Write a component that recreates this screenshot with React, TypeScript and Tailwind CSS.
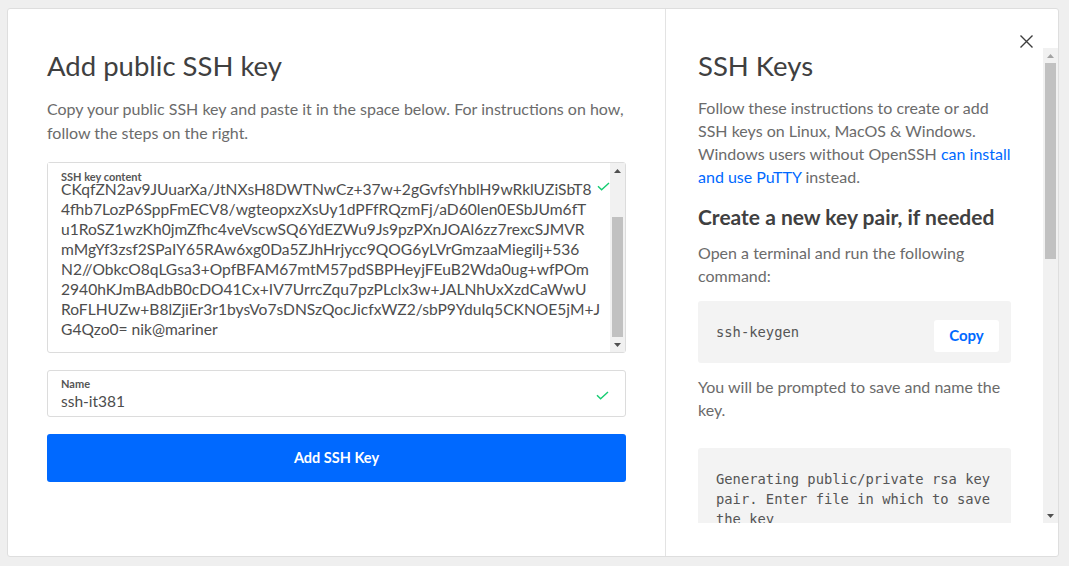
const sans = { fontFamily: 'Lato, "Open Sans", sans-serif' };
const mono = { fontFamily: '"DejaVu Sans Mono", monospace' };

const keyLines = [
  'ssh-rsa AAAAB3NzaC1yc2EAAAADAQABAAABgQC7mW4pZ0kE2Lq9dXvR8sYtN1',
  'xJ3bT9rQaV6mH0cLw2uPz8Kf5gDnEoS4yRtU7iWjB1hXkM3vZ/pqNaLd6sOe',
  'CKqfZN2av9JUuarXa/JtNXsH8DWTNwCz+37w+2gGvfsYhblH9wRklUZiSbT8',
  '4fhb7LozP6SppFmECV8/wgteopxzXsUy1dPFfRQzmFj/aD60len0ESbJUm6fT',
  'u1RoSZ1wzKh0jmZfhc4veVscwSQ6YdEZWu9Js9pzPXnJOAl6zz7rexcSJMVR',
  'mMgYf3zsf2SPaIY65RAw6xg0Da5ZJhHrjycc9QOG6yLVrGmzaaMiegilj+536',
  'N2//ObkcO8qLGsa3+OpfBFAM67mtM57pdSBPHeyjFEuB2Wda0ug+wfPOm',
  '2940hKJmBAdbB0cDO41Cx+IV7UrrcZqu7pzPLclx3w+JALNhUxXzdCaWwU',
  'RoFLHUZw+B8lZjiEr3r1bysVo7sDNSzQocJicfxWZ2/sbP9YduIq5CKNOE5jM+J',
  'G4Qzo0= nik@mariner',
];

function CheckMark() {
  return (
    <svg width="13" height="9" viewBox="0 0 13 9" fill="none" className="block">
      <path d="M1 4.2 L4.6 7.8 L12 1" stroke="#15cd72" strokeWidth="1.4" />
    </svg>
  );
}

// classic scrollbar look: arrows top and bottom, grey thumb
function Scrollbar({ offset, thumb, upColor }: { offset: string; thumb: string; upColor: string }) {
  return (
    <div className="flex h-full w-[15px] shrink-0 flex-col bg-[#f1f1f1]">
      <div className="flex h-[15px] items-center justify-center">
        <svg width="7" height="4" viewBox="0 0 7 4" className="block">
          <path d="M0 4 L3.5 0 L7 4 Z" fill={upColor} />
        </svg>
      </div>
      <div className={offset} />
      <div className={`${thumb} mx-[2px] bg-[#c1c1c1]`} />
      <div className="flex-1" />
      <div className="flex h-[15px] items-center justify-center">
        <svg width="7" height="4" viewBox="0 0 7 4" className="block">
          <path d="M0 0 L7 0 L3.5 4 Z" fill="#505050" />
        </svg>
      </div>
    </div>
  );
}

function CodeBlock({ lines }: { lines: string[] }) {
  return (
    <div className="overflow-hidden rounded-[3px] bg-[#f3f3f3] px-[18px] py-[21px]">
      <pre className="text-[13.8px] leading-[20px] text-[#555]" style={mono}>
        {lines.join('\n')}
      </pre>
    </div>
  );
}

export default function App() {
  return (
    <div className="h-screen w-full overflow-hidden bg-[#efefef] pl-[7px] pt-[8px]" style={sans}>
      <div className="relative flex h-[549px] w-[1052px] rounded-[3px] border border-[#dedede] bg-white">
        {/* left: form */}
        <div className="w-[658px] shrink-0 border-r border-[#e3e3e3] px-[39px] pt-[40px]">
          <h1 className="text-[27.5px] leading-[34px] text-[#404040]">Add public SSH key</h1>
          <p className="mt-[14px] text-[16px] leading-[24px] text-[#6b6b6b]">
            Copy your public SSH key and paste it in the space below. For instructions on how,
            follow the steps on the right.
          </p>

          <div className="relative mt-[17px] flex h-[191px] rounded-[3px] border border-[#dcdcdc]">
            <div className="flex flex-1 flex-col justify-end overflow-hidden pl-[13px] pb-[13px] text-[15.6px] leading-[20px] text-[#4d4d4d]">
              {keyLines.map((l, i) => (
                <div key={i} className="shrink-0 whitespace-pre">{l}</div>
              ))}
            </div>
            <Scrollbar offset="h-[39px]" thumb="h-[120px]" upColor="#505050" />
            <div className="absolute left-0 right-[16px] top-0 h-[18px] bg-white pl-[13px] pt-[8px]">
              <span className="block text-[11px] font-bold leading-[12px] text-[#555]">SSH key content</span>
            </div>
            <div className="absolute right-[15px] top-[19px]">
              <CheckMark />
            </div>
          </div>

          <div className="relative mt-[17px] h-[47px] rounded-[3px] border border-[#dcdcdc] px-[13px] pt-[7px]">
            <div className="text-[11px] font-bold leading-[12px] text-[#555]">Name</div>
            <div className="mt-[1px] text-[15.5px] leading-[20px] text-[#4d4d4d]">ssh-it381</div>
            <div className="absolute right-[16px] top-[20px]">
              <CheckMark />
            </div>
          </div>

          <button className="mt-[17px] flex h-[48px] w-full items-center justify-center rounded-[3px] bg-[#0069ff] text-[14.5px] font-bold text-white">
            Add SSH Key
          </button>
        </div>

        {/* right: instructions */}
        <div className="relative min-w-0 flex-1 pt-[39px] pb-[33px]">
          <button className="absolute right-[22px] top-[23px] p-[3px]">
            <svg width="13" height="13" viewBox="0 0 13 13" className="block">
              <path d="M0.5 0.5 L12.5 12.5 M12.5 0.5 L0.5 12.5" stroke="#3d3d3d" strokeWidth="1.4" />
            </svg>
          </button>
          <div className="flex h-full">
            <div className="min-w-0 flex-1 overflow-hidden pl-[32px] pr-[32px]">
              <h2 className="mt-[1px] text-[27.5px] leading-[34px] text-[#404040]">SSH Keys</h2>
              <p className="mt-[13px] text-[16px] leading-[23px] text-[#6b6b6b]">
                Follow these instructions to create or add SSH keys on Linux, MacOS &amp; Windows.
                Windows users without OpenSSH{' '}
                <a className="text-[#0069ff]">can install and use PuTTY</a> instead.
              </p>

              <h3 className="mt-[15px] text-[21px] font-bold leading-[28px] text-[#404040]">
                Create a new key pair, if needed
              </h3>
              <p className="mt-[10px] text-[16px] leading-[23px] text-[#6b6b6b]">
                Open a terminal and run the following command:
              </p>

              <div className="mt-[14px] flex h-[62px] items-center justify-between rounded-[3px] bg-[#f3f3f3] pl-[18px] pr-[12px]">
                <span className="text-[13.8px] text-[#555]" style={mono}>
                  ssh-keygen
                </span>
                <span className="mt-[7px] flex h-[32px] w-[65px] items-center justify-center rounded-[3px] bg-white text-[15px] font-bold text-[#0069ff]">
                  Copy
                </span>
              </div>

              <p className="mt-[12px] text-[16px] leading-[23px] text-[#6b6b6b]">
                You will be prompted to save and name the key.
              </p>

              <div className="mt-[27px]">
                <CodeBlock
                  lines={[
                    'Generating public/private rsa key',
                    'pair. Enter file in which to save',
                    'the key',
                    '(/Users/USER/.ssh/id_rsa):',
                  ]}
                />
              </div>

              <p className="mt-[16px] text-[16px] leading-[23px] text-[#6b6b6b]">
                Next you will be asked to create and confirm a passphrase for the key.
              </p>
            </div>
            <Scrollbar offset="h-0" thumb="h-[196px]" upColor="#a3a3a3" />
          </div>
        </div>
      </div>
    </div>
  );
}
